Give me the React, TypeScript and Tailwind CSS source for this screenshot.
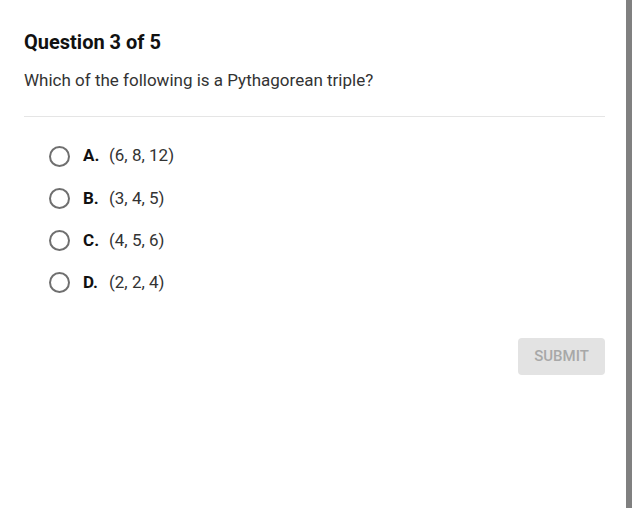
import { useState } from 'react';

const OPTIONS = [
  { key: 'A', text: '(6, 8, 12)' },
  { key: 'B', text: '(3, 4, 5)' },
  { key: 'C', text: '(4, 5, 6)' },
  { key: 'D', text: '(2, 2, 4)' },
];

export default function App() {
  const [selected, setSelected] = useState<string | null>(null);

  return (
    <div className="flex h-[524px] w-[638px] bg-white font-['Roboto',sans-serif] text-[#212121]">
      <div className="w-[626px] pl-6 pr-[21px] pt-[30px]">
        {/* Header */}
        <h1 className="text-[20px] font-bold leading-6 text-[#111]">Question 3 of 5</h1>
        <p className="mt-[14px] text-[17px] leading-6 text-[#333]">
          Which of the following is a Pythagorean triple?
        </p>
        <div className="mt-[24px] h-px bg-[#e5e5e5]" />

        {/* Options */}
        <div className="mt-[29px] flex flex-col gap-[22.3px] pl-[25px]">
          {OPTIONS.map((opt) => (
            <label key={opt.key} className="flex h-5 cursor-pointer items-center">
              <input
                type="radio"
                name="answer"
                className="sr-only"
                checked={selected === opt.key}
                onChange={() => setSelected(opt.key)}
              />
              <span className="flex size-[21px] items-center justify-center rounded-full border-2 border-[#6f6f6f]">
                {selected === opt.key && <span className="size-[11px] rounded-full bg-[#6f6f6f]" />}
              </span>
              <span className="ml-[13px] w-[26px] text-[17px] font-bold text-[#111]">{opt.key}.</span>
              <span className="text-[17px] text-[#333]">{opt.text}</span>
            </label>
          ))}
        </div>

        {/* Submit */}
        <div className="mt-[45px] flex justify-end">
          <button
            disabled={selected === null}
            className="h-[37px] w-[87px] rounded bg-[#e3e3e3] text-[15px] font-medium text-[#a8a8a8]"
          >
            SUBMIT
          </button>
        </div>
      </div>
      <div className="h-[508px] w-[6px] bg-[#808080]" />
    </div>
  );
}
